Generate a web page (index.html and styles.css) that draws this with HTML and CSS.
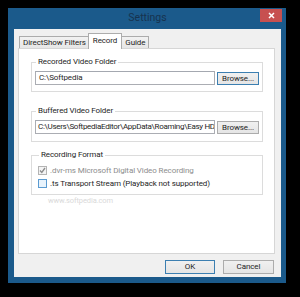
FILE: index.html
```html
<!DOCTYPE html>
<html>
<head>
<meta charset="utf-8">
<link rel="stylesheet" href="styles.css">
</head>
<body>
<div class="window">
  <div class="titlebar">
    <span class="title">Settings</span>
    <span class="close">
      <svg width="7" height="7" viewBox="0 0 7 7"><path d="M1 1L6 6M6 1L1 6" stroke="#fff" stroke-width="1.5"/></svg>
    </span>
  </div>
  <div class="client">
    <div class="tabs">
      <div class="tab">DirectShow Filters</div>
      <div class="tab active">Record</div>
      <div class="tab">Guide</div>
    </div>
    <div class="panel">
      <fieldset class="group">
        <legend>Recorded Video Folder</legend>
        <div class="pathrow">
          <div class="textbox">C:\Softpedia</div>
          <div class="btn small default">Browse...</div>
        </div>
      </fieldset>
      <fieldset class="group g2">
        <legend>Buffered Video Folder</legend>
        <div class="pathrow">
          <div class="textbox long">C:\Users\SoftpediaEditor\AppData\Roaming\Easy HD</div>
          <div class="btn small">Browse...</div>
        </div>
      </fieldset>
      <fieldset class="group g3">
        <legend>Recording Format</legend>
        <div class="check disabled">
          <span class="box"><svg width="7" height="7" viewBox="0 0 7 7"><path d="M1 3.5L2.8 5.5L6 1" stroke="#8c8c8c" stroke-width="1.3" fill="none"/></svg></span>
          <span>.dvr-ms Microsoft Digital Video Recording</span>
        </div>
        <div class="check">
          <span class="box hover"></span>
          <span>.ts Transport Stream (Playback not supported)</span>
        </div>
      </fieldset>
      <div class="watermark">www.softpedia.com</div>
    </div>
    <div class="buttons">
      <div class="btn default">OK</div>
      <div class="btn">Cancel</div>
    </div>
  </div>
</div>
</body>
</html>
```
FILE: styles.css
```css
html, body {
  margin: 0;
  padding: 0;
  background: #000;
}
body {
  width: 300px;
  height: 297px;
  overflow: hidden;
  font-family: "Roboto", "Liberation Sans", sans-serif;
  font-size: 8px;
  letter-spacing: -0.1px;
  color: #1e1e1e;
}
.window {
  margin: 8px 0 0 8px;
  width: 278px;
  height: 275px;
  background: #1b5a8b;
  display: flex;
  flex-direction: column;
  box-sizing: border-box;
  padding: 0 5px 6px 6px;
}
.titlebar {
  height: 21px;
  display: flex;
  justify-content: center;
  position: relative;
}
.title {
  font-size: 10.5px;
  letter-spacing: 0;
  color: #17334f;
  line-height: 20px;
}
.close {
  position: absolute;
  right: -1px;
  top: 1px;
  width: 22px;
  height: 13px;
  background: #c75050;
  display: flex;
  align-items: center;
  justify-content: center;
}
.close svg { display: block; }
.client {
  flex: 1;
  background: #f0f0f0;
  display: flex;
  flex-direction: column;
  padding: 0 6px 0 4px;
}
.tabs {
  height: 19px;
  display: flex;
  align-items: flex-end;
  padding-left: 1px;
  position: relative;
  z-index: 1;
}
.tab {
  height: 12px;
  box-sizing: border-box;
  border: 1px solid #acacac;
  border-bottom: none;
  margin-right: -1px;
  background: linear-gradient(#f2f2f2, #e6e6e6);
  padding: 0 3px;
  line-height: 11px;
  white-space: nowrap;
}
.tab.active {
  height: 16px;
  background: #fff;
  margin: 0 -1px -1px -1px;
  padding: 0 4px;
  line-height: 14px;
  position: relative;
}
.panel {
  height: 206px;
  box-sizing: border-box;
  background: #fff;
  border: 1px solid #d6d6d6;
  padding: 8px 11px 0 12px;
  display: flex;
  flex-direction: column;
}
.group {
  margin: 0;
  border: 1px solid #dcdcdc;
  padding: 4px 3px 6px 3px;
  min-width: 0;
}
.group legend {
  padding: 0 2px;
  margin-left: 1px;
  line-height: 10px;
}
.g2 { margin-top: 14px; padding-bottom: 7px; }
.g3 { margin-top: 8px; padding: 4px 3px 4px 6px; }
.pathrow {
  display: flex;
  align-items: center;
  gap: 2px;
}
.textbox {
  width: 180px;
  height: 14px;
  box-sizing: border-box;
  border: 1px solid #abadb3;
  border-top-color: #a4a8b0;
  padding-left: 3px;
  line-height: 12px;
  white-space: nowrap;
  overflow: hidden;
  background: #fff;
}
.textbox.long { letter-spacing: -0.3px; padding-left: 2px; }
.btn {
  box-sizing: border-box;
  border: 1px solid #acacac;
  background: linear-gradient(#f0f0f0, #e5e5e5);
  text-align: center;
  white-space: nowrap;
}
.btn.small {
  width: 42px;
  height: 13px;
  line-height: 11px;
}
.btn.default { border-color: #3c7fb1; }
.check {
  display: flex;
  align-items: center;
  gap: 3px;
  height: 13px;
}
.check.disabled { color: #8d8d8d; }
.box {
  width: 9px;
  height: 9px;
  box-sizing: border-box;
  border: 1px solid #b4b4b4;
  background: #f4f4f4;
  display: flex;
  align-items: center;
  justify-content: center;
}
.box svg { display: block; }
.box.hover {
  border-color: #5b9bd1;
  background: #e8f3fc;
}
.watermark {
  margin: 1px 0 0 17px;
  color: #d9d9d9;
  font-size: 7.5px;
}
.buttons {
  display: flex;
  justify-content: flex-end;
  gap: 8px;
  margin-top: 6px;
  padding-right: 1px;
}
.buttons .btn {
  width: 50px;
  height: 14px;
  line-height: 12px;
}
.buttons .btn + .btn { width: 51px; }
```
